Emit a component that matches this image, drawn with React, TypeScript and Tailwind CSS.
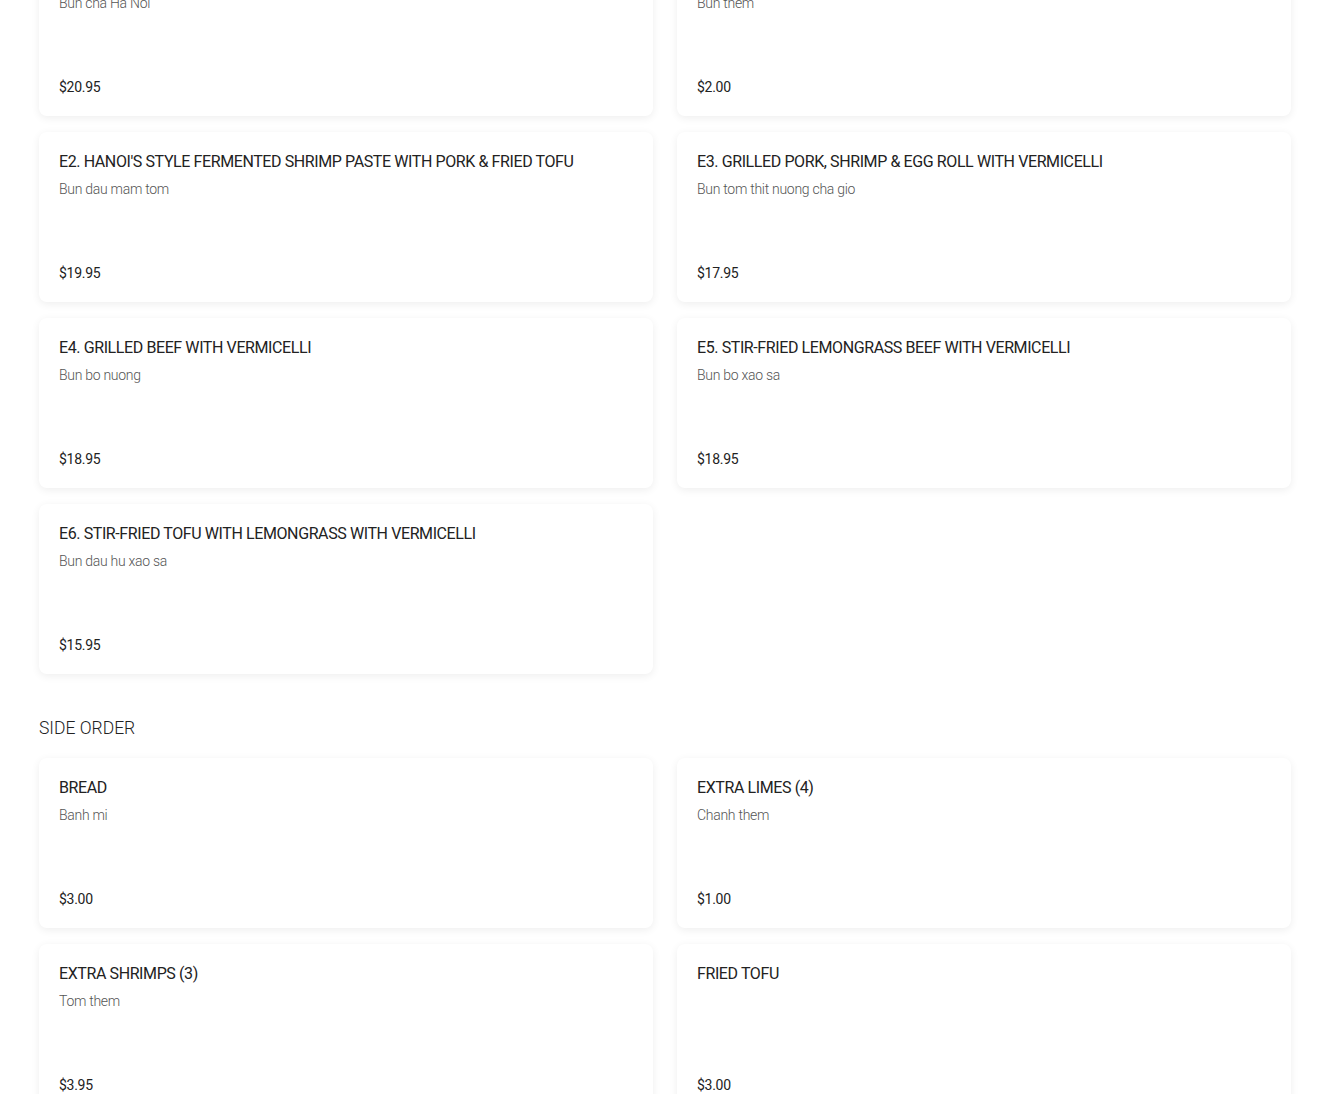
import React from "react";

type Item = { name: string; desc?: string; price: string };

const top: Item[] = [
  { name: "E1. HANOI'S STYLE GRILLED PORK WITH VERMICELLI", desc: "Bun cha Ha Noi", price: "$20.95" },
  { name: "EXTRA VERMICELLI", desc: "Bun them", price: "$2.00" },
  { name: "E2. HANOI'S STYLE FERMENTED SHRIMP PASTE WITH PORK & FRIED TOFU", desc: "Bun dau mam tom", price: "$19.95" },
  { name: "E3. GRILLED PORK, SHRIMP & EGG ROLL WITH VERMICELLI", desc: "Bun tom thit nuong cha gio", price: "$17.95" },
  { name: "E4. GRILLED BEEF WITH VERMICELLI", desc: "Bun bo nuong", price: "$18.95" },
  { name: "E5. STIR-FRIED LEMONGRASS BEEF WITH VERMICELLI", desc: "Bun bo xao sa", price: "$18.95" },
  { name: "E6. STIR-FRIED TOFU WITH LEMONGRASS WITH VERMICELLI", desc: "Bun dau hu xao sa", price: "$15.95" },
];

const sides: Item[] = [
  { name: "BREAD", desc: "Banh mi", price: "$3.00" },
  { name: "EXTRA LIMES (4)", desc: "Chanh them", price: "$1.00" },
  { name: "EXTRA SHRIMPS (3)", desc: "Tom them", price: "$3.95" },
  { name: "FRIED TOFU", price: "$3.00" },
];

function Card({ item }: { item: Item }) {
  return (
    <div className="h-[170px] rounded-lg bg-white px-5 pt-[19px] pb-[19px] flex flex-col justify-between shadow-[0_2px_8px_rgba(0,0,0,0.07)]">
      <div>
        <div className="text-[16px] leading-[22px] text-[#222] tracking-[-0.025em]">{item.name}</div>
        {item.desc && (
          <div className="mt-[7px] text-[14px] leading-[18px] text-[#555] font-light tracking-[-0.02em]">{item.desc}</div>
        )}
      </div>
      <div className="text-[14px] leading-[20px] text-[#222] tracking-[-0.02em]">{item.price}</div>
    </div>
  );
}

export default function App() {
  return (
    <div className="bg-white min-h-[1094px] overflow-hidden" style={{ fontFamily: "Roboto, 'Noto Sans', sans-serif" }}>
      <div className="mx-[39px] -mt-[54px]">
        <div className="grid grid-cols-2 gap-x-6 gap-y-4">
          {top.map((it, i) => (
            <Card key={i} item={it} />
          ))}
        </div>
        <div className="mt-[42px] mb-[18px] text-[17.5px] leading-[24px] tracking-[0em] text-[#222] font-light">SIDE ORDER</div>
        <div className="grid grid-cols-2 gap-x-6 gap-y-4">
          {sides.map((it, i) => (
            <Card key={i} item={it} />
          ))}
        </div>
      </div>
    </div>
  );
}
